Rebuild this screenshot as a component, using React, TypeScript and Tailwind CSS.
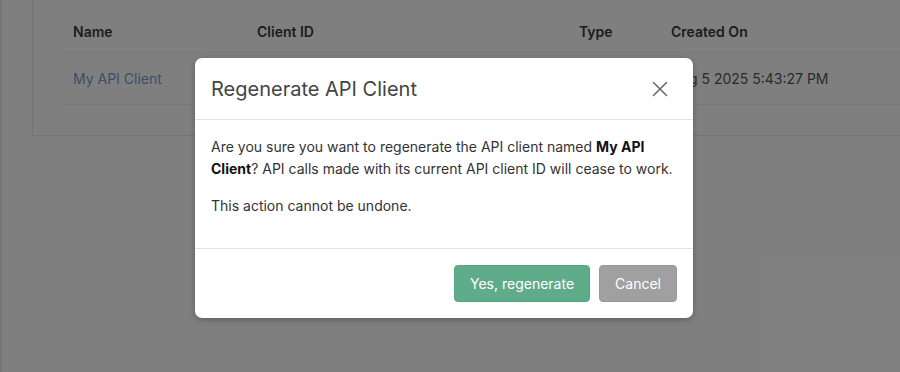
import React from "react";

export default function App() {
  return (
    <div
      className="relative w-[900px] h-[372px] overflow-hidden bg-white flex"
      style={{ fontFamily: "Inter, 'Noto Sans', sans-serif" }}
    >
      <div className="w-[2px] shrink-0 bg-[#eceaff]" />
      <div className="flex-1 pl-[30px]">
        <div className="w-[900px] border border-t-0 border-[#e9e9e9] pl-[30px] pt-[11px] pb-[30px]">
          <div className="flex h-[42px] items-center border-b border-[#eeeeee] text-[14px] font-semibold text-[#3a3a3a]">
            <div className="w-[184px] pl-[10px]">Name</div>
            <div className="w-[322px] pl-[10px]">Client ID</div>
            <div className="w-[92px] pl-[10px]">Type</div>
            <div className="pl-[10px]">Created On</div>
          </div>
          <div className="flex h-[52px] items-center border-b border-[#eeeeee] text-[14px] text-[#555]">
            <div className="w-[184px] pl-[10px] text-[#6f9fd8]">My API Client</div>
            <div className="w-[322px] pl-[10px]" />
            <div className="w-[92px] pl-[10px]" />
            <div className="pl-[10px]">Aug 5 2025 5:43:27 PM</div>
          </div>
        </div>
      </div>

      <div className="absolute inset-0 bg-black/50" />

      <div className="absolute left-[195px] top-[58px] w-[498px] rounded-[7px] bg-white shadow-[0_2px_6px_rgba(0,0,0,0.25)]">
        <div className="flex h-[62px] items-center justify-between border-b border-[#e3e3e3] px-4">
          <h2 className="text-[20px] font-normal text-[#444]">Regenerate API Client</h2>
          <button className="mr-[7px] flex h-[20px] w-[20px] items-center justify-center text-[#6a6a6a]">
            <svg width="16" height="16" viewBox="0 0 16 16" fill="none" stroke="currentColor" strokeWidth="1.6" strokeLinecap="round">
              <path d="M1.5 1.5L14.5 14.5M14.5 1.5L1.5 14.5" />
            </svg>
          </button>
        </div>
        <div className="px-4 pt-4 pb-4 text-[14px] leading-[22px] text-[#333]">
          <p className="mb-[15px]">
            Are you sure you want to regenerate the API client named <strong className="font-bold text-[#111]">My API Client</strong>? API calls made with its current API client ID will cease to work.
          </p>
          <p className="mb-[15px]">This action cannot be undone.</p>
        </div>
        <div className="flex justify-end gap-[9px] border-t border-[#e3e3e3] px-4 pt-4 pb-4">
          <button className="h-[37px] rounded-[4px] border border-[#56a482] bg-[#5fac8b] px-[15px] text-[14px] text-white">
            Yes, regenerate
          </button>
          <button className="h-[37px] rounded-[4px] border border-[#979797] bg-[#a0a0a0] px-[15px] text-[14px] text-white">
            Cancel
          </button>
        </div>
      </div>
    </div>
  );
}
